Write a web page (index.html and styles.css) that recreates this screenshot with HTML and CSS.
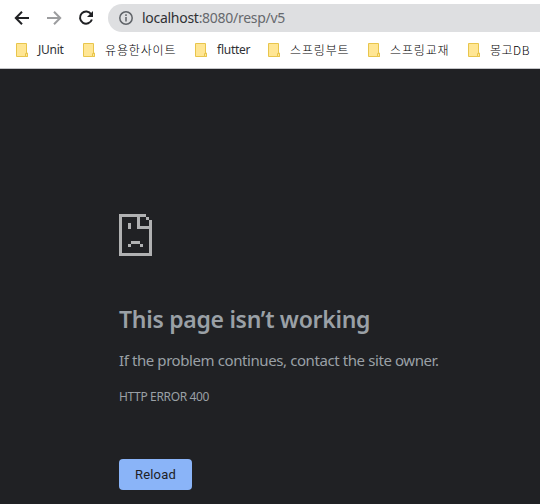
FILE: index.html
```
<!DOCTYPE html>
<html lang="en">
<head>
<meta charset="utf-8">
<title>localhost</title>
<link rel="stylesheet" href="styles.css">
</head>
<body>
<svg class="defs" width="0" height="0" aria-hidden="true">
  <symbol id="folder" viewBox="0 0 13 15">
    <path d="M.5.5h10v9.5h1v3.5h-11z" fill="#ffe694" stroke="#e8c54c"/>
    <path d="M9.5 13.5v-3h2v3z" fill="#ffe694" stroke="#e8c54c"/>
  </symbol>
</svg>
<header class="chrome">
  <div class="toolbar">
    <svg class="nav" viewBox="0 0 16 16"><path d="M15 8H2M8 1.8 1.8 8 8 14.2" /></svg>
    <svg class="nav forward" viewBox="0 0 16 16"><path d="M1 8h13M8 1.8 14.2 8 8 14.2" /></svg>
    <svg class="nav reload-icon" viewBox="0 0 16 16"><path d="M13.2 4.2A6.1 6.1 0 1 0 13.9 9.5"/><path class="tip" d="M15 1v6H9z"/></svg>
    <div class="address">
      <svg class="info" viewBox="0 0 14 14"><circle cx="7" cy="7" r="6.2"/><path d="M7 6v4.5M7 3.3v1.6"/></svg>
      <span class="url"><span class="host">localhost</span>:8080/resp/v5</span>
    </div>
  </div>
  <nav class="bookmarks">
    <a class="w67"><svg><use href="#folder"/></svg><span class="latin">JUnit</span></a>
    <a class="w112"><svg><use href="#folder"/></svg><span>유용한사이트</span></a>
    <a class="w73"><svg><use href="#folder"/></svg><span class="latin">flutter</span></a>
    <a class="w100"><svg><use href="#folder"/></svg><span>스프링부트</span></a>
    <a class="w100"><svg><use href="#folder"/></svg><span>스프링교재</span></a>
    <a class="w100"><svg><use href="#folder"/></svg><span class="mixed">몽고DB</span></a>
  </nav>
</header>
<main class="error">
  <svg class="sad" viewBox="0 0 11 14" shape-rendering="crispEdges"><path d="M0 0h9v1H7v3h3V2h1v12H0zM1 1v12h9V5H6V1zM9 1h1v1H9zM3 3h1v2H3zM4 9h3v1H4zM3 10h1v1H3zM7 10h1v1H7z" fill-rule="evenodd"/></svg>
  <h1><span>This page isn’t working</span></h1>
  <p class="message"><span>If the problem continues, contact the site owner.</span></p>
  <p class="code"><span>HTTP ERROR 400</span></p>
  <button>Reload</button>
</main>
</body>
</html>
```
FILE: styles.css
```
* { box-sizing: border-box; }
body {
  margin: 0;
  height: 504px;
  overflow: hidden;
  display: flex;
  flex-direction: column;
  background: #202124;
  font-family: "Noto Sans", "Noto Sans CJK KR", sans-serif;
}
.defs { position: absolute; }
.chrome {
  height: 69px;
  flex: none;
  background: #fff;
  border-bottom: 1px solid #c4c5c8;
  overflow: hidden;
}
.toolbar {
  height: 36px;
  padding-left: 14px;
  display: flex;
  align-items: center;
}
.nav {
  width: 16px;
  height: 16px;
  margin-right: 16px;
  flex: none;
  fill: none;
  stroke: #202124;
  stroke-width: 2;
}
.forward { stroke: #9c9d9f; }
.reload-icon { margin-right: 14px; }
.tip { fill: #202124; stroke: none; }
.address {
  width: 440px;
  height: 28px;
  flex: none;
  padding-left: 11px;
  display: flex;
  align-items: center;
  border-radius: 14px 0 0 14px;
  background: #dedfe1;
}
.info {
  width: 14px;
  height: 14px;
  margin-right: 9px;
  fill: none;
  stroke: #5f6368;
  stroke-width: 1.5;
}
.url {
  font-size: 14px;
  line-height: 20px;
  letter-spacing: -.28px;
  color: #66696d;
  white-space: nowrap;
}
.host { color: #303134; }
.bookmarks {
  height: 28px;
  padding-left: 16px;
  display: flex;
  align-items: center;
  font: 300 12px/18px "Noto Sans CJK KR", sans-serif;
  letter-spacing: .85px;
  color: #000;
  white-space: nowrap;
}
.bookmarks a { flex: none; display: flex; align-items: center; }
.bookmarks svg { width: 13px; height: 15px; margin-right: 9px; }
.bookmarks .latin {
  font-family: "Noto Sans", sans-serif;
  font-weight: 400;
  letter-spacing: -.25px;
  color: #303134;
}
.bookmarks .mixed { letter-spacing: .5px; }
.w67 { width: 67px; }
.w112 { width: 112px; }
.w73 { width: 73px; }
.w100 { width: 100px; }
.error {
  padding: 145px 0 0 119px;
  display: flex;
  flex-direction: column;
  align-items: flex-start;
  color: #9aa0a6;
  white-space: nowrap;
}
.sad { width: 33px; height: 42px; fill: #b0b1b2; }
h1, p { margin: 0; }
h1 {
  margin-top: 48px;
  font-size: 23px;
  font-weight: 600;
  line-height: 30px;
  letter-spacing: -.29px;
}
.message { margin-top: 16px; font-size: 15px; line-height: 20px; letter-spacing: -.41px; }
.code { margin-top: 18px; font-size: 12px; line-height: 18px; letter-spacing: -.35px; }
button {
  width: 73px;
  height: 31px;
  margin-top: 53px;
  padding: 0;
  border: 0;
  border-radius: 4px;
  background: #8ab4f8;
  color: #202124;
  font: 13px/31px Roboto, sans-serif;
  letter-spacing: .15px;
}
```
